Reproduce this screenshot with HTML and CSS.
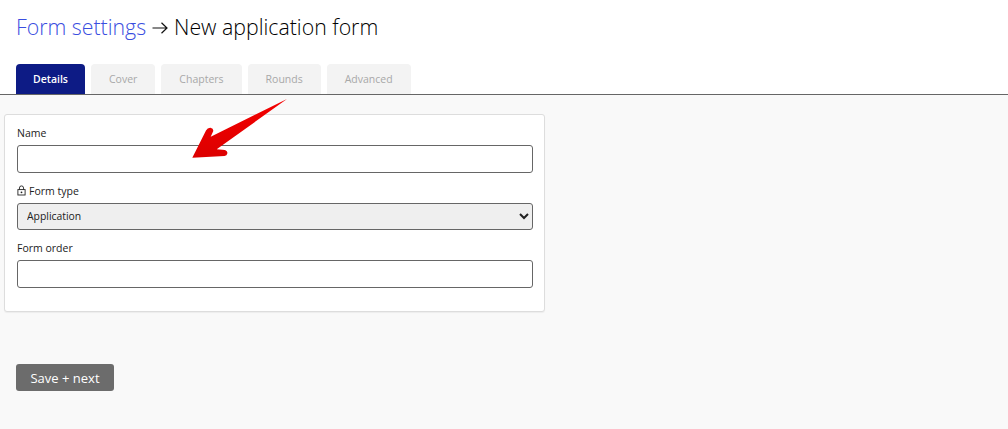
FILE: index.html
```html
<!DOCTYPE html>
<html lang="en">

<head>
  <meta charset="utf-8">
  <title>New application form</title>
  <link rel="stylesheet" href="styles.css">
</head>

<body>
  <div class="top">
    <h1 class="page-title">
      <a href="#">Form settings</a>
      <svg class="sep" viewBox="0 0 16 12" width="16" height="12">
        <path d="M0.500 6H15M9.500 0.700L15 6L9.500 11.300" fill="none" stroke="#111" stroke-width="1.200"/>
      </svg>
      <span>New application form</span>
    </h1>
    <div class="tabs">
      <a class="tab active" href="#">Details</a>
      <a class="tab" href="#">Cover</a>
      <a class="tab" href="#">Chapters</a>
      <a class="tab" href="#">Rounds</a>
      <a class="tab" href="#">Advanced</a>
    </div>
  </div>

  <div class="content">
    <form class="card">
      <div class="field">
        <label for="name">Name</label>
        <input class="control" id="name" type="text">
      </div>
      <div class="field">
        <label for="type">
          <svg class="lock" viewBox="0 0 10 12" width="9" height="11">
            <path d="M2.700 5V3.200a2.300 2.300 0 0 1 4.600 0V5" fill="none" stroke="#222" stroke-width="1"/>
            <rect x="1" y="5" width="8" height="6" fill="none" stroke="#222" stroke-width="1"/>
            <circle cx="5" cy="8" r="1" fill="#222"/>
          </svg>
          Form type
        </label>
        <select class="control locked" id="type">
          <option>Application</option>
        </select>
      </div>
      <div class="field">
        <label for="order">Form order</label>
        <input class="control" id="order" type="text">
      </div>
    </form>
    <button class="save" type="button">Save + next</button>
  </div>

  <!-- annotation drawn on top of the screenshot -->
  <svg class="annotation" viewBox="0 0 110 70" width="110" height="70">
    <defs>
      <linearGradient id="red" x1="0" y1="0" x2="0" y2="1">
        <stop offset="0" stop-color="#f40000"/>
        <stop offset="1" stop-color="#dc0000"/>
      </linearGradient>
    </defs>
    <path d="M105 5 L34.700 55.300 L43 56 Q46 57.500 45.300 59.500 Q45 61.800 42.500 62 L10.300 63.700 L24 36.500 Q25.500 33.500 28.500 33.700 Q31.500 34.500 31.300 37 L28.700 42.700 Z" fill="url(#red)"/>
  </svg>
</body>

</html>
```

FILE: styles.css
```css
html, body {
	margin: 0;
	padding: 0;
	height: 100%;
}
body {
	position: relative;
	overflow: hidden;
	background-color: #f9f9f9;
	font-family: "Open Sans", "Noto Sans", sans-serif;
	color: #222;
}
.top {
	background-color: #fff;
	border-bottom: 1px solid #666;
	height: 94px;
	padding-left: 16px;
	display: flex;
	flex-direction: column;
}
.page-title {
	display: flex;
	align-items: flex-start;
	gap: 6px;
	margin: 0;
	padding-top: 12px;
	height: 52px;
	box-sizing: border-box;
	font-size: 21.300px;
	line-height: 30px;
	font-weight: 300;
	color: #000;
	white-space: nowrap;
}
.page-title a {
	color: #3a4ee0;
	text-decoration: none;
}
.sep {
	margin-top: 10px;
}
.tabs {
	display: flex;
	gap: 6px;
	margin-top: 12px;
}
.tab {
	height: 30px;
	line-height: 30px;
	padding: 0 18px;
	background-color: #f3f3f3;
	border-radius: 4px 4px 0 0;
	font-size: 10.500px;
	color: #a8a8a8;
	text-decoration: none;
}
.tab.active {
	padding: 0 17px;
	background-color: #0d1b85;
	color: #fff;
	font-weight: 600;
}
.content {
	padding: 19px 0 0 4px;
}
.card {
	width: 541px;
	height: 198px;
	box-sizing: border-box;
	padding: 11px 12px 0 12px;
	background-color: #fff;
	border: 1px solid #ddd;
	border-radius: 3px;
	box-shadow: 0 1px 1px rgba(0, 0, 0, 0.05);
}
.field {
	margin-bottom: 11px;
}
.field label {
	display: flex;
	align-items: flex-start;
	gap: 3px;
	height: 19px;
	font-size: 10.500px;
	line-height: 15px;
	color: #222;
}
.lock {
	margin-top: 1px;
}
.control {
	display: block;
	width: 516px;
	height: 28px;
	box-sizing: border-box;
	margin: 0;
	padding: 0 9px;
	background-color: #fff;
	border: 1px solid #666;
	border-radius: 3px;
	font-family: inherit;
	font-size: 10.400px;
	color: #222;
}
.control.locked {
	height: 27px;
	padding: 0 5px 2px;
	background-color: #efefef;
}
.save {
	display: block;
	width: 98px;
	height: 27px;
	margin: 52px 0 0 12px;
	padding: 0;
	background-color: #6c6c6c;
	border: 0;
	border-radius: 3px;
	font-family: inherit;
	font-size: 13px;
	color: #fff;
}
.annotation {
	position: absolute;
	left: 182px;
	top: 94px;
}
```
